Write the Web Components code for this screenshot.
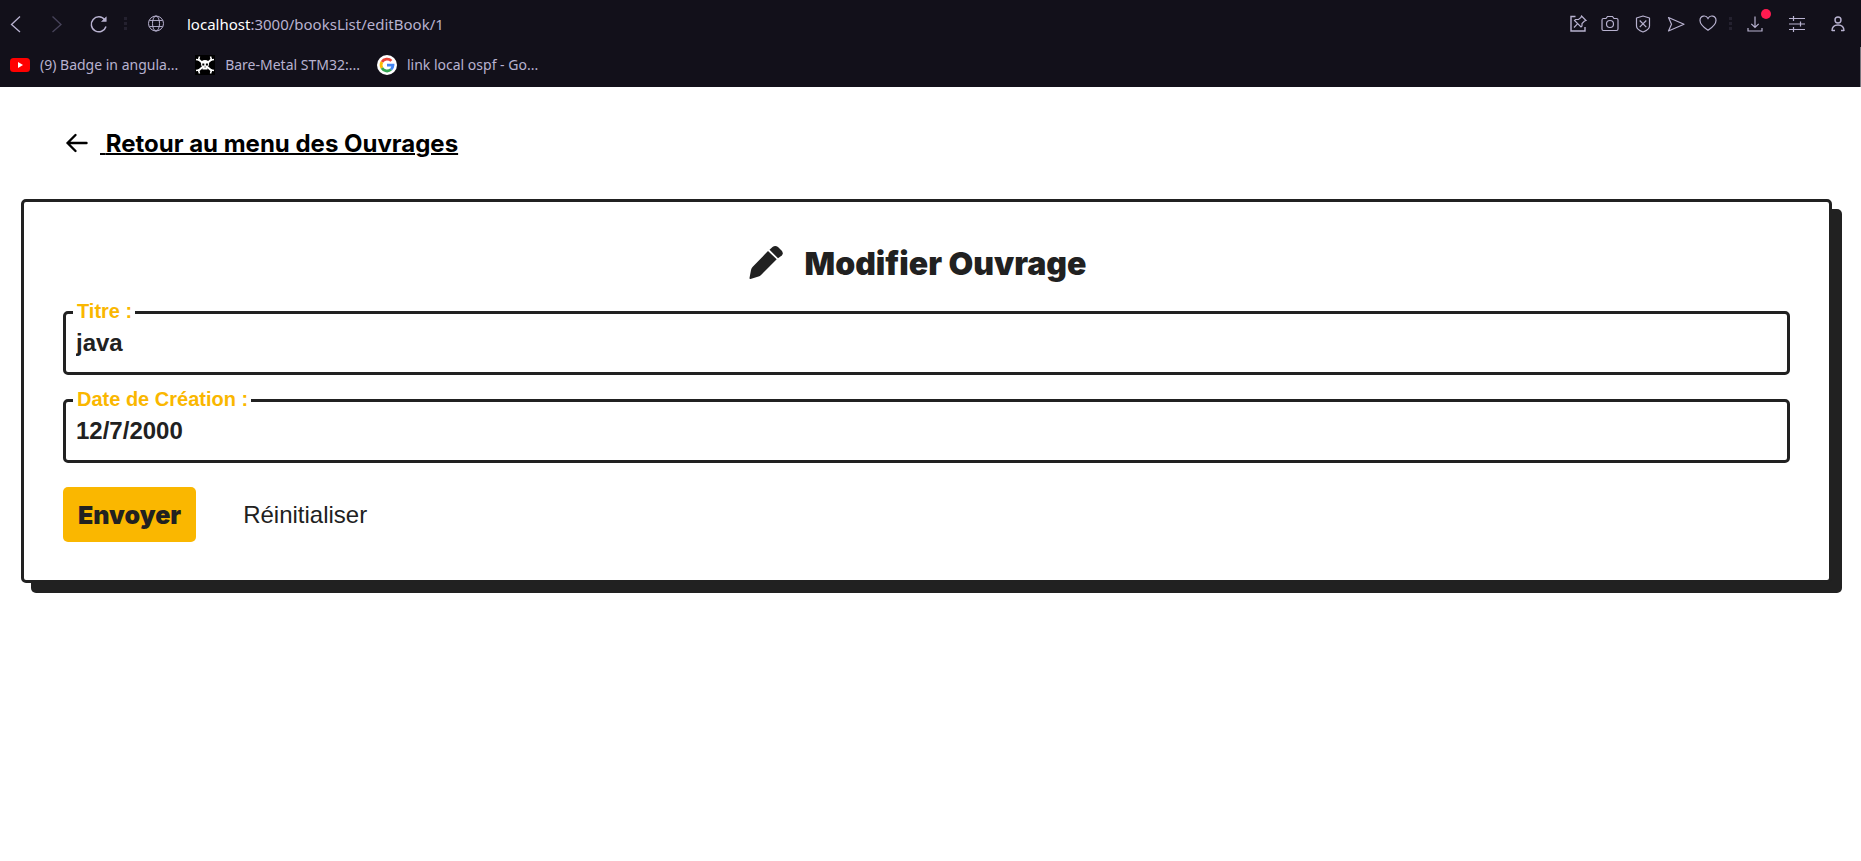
<!DOCTYPE html>
<html lang="fr">
<head>
<meta charset="utf-8">
<meta name="viewport" content="width=device-width, initial-scale=1">
<title>Modifier Ouvrage</title>
<style>
  body { margin: 0; min-height: 100vh; background: #fff; color: #212121; font-family: Inter, "Liberation Sans", sans-serif; }
  main { padding-bottom: 24px; }
</style>
</head>
<body>
<browser-chrome></browser-chrome>
<main>
  <back-link href="#">Retour au menu des Ouvrages</back-link>
  <book-card heading="Modifier Ouvrage">
    <text-field label="Titre :" name="titre" value="java"></text-field>
    <text-field label="Date de Création :" name="date" value="12/7/2000"></text-field>
    <form-actions></form-actions>
  </book-card>
</main>

<script>
const define = (name, html, setup) => {
  const template = document.createElement('template');
  template.innerHTML = html;
  customElements.define(name, class extends HTMLElement {
    constructor() {
      super();
      this.attachShadow({ mode: 'open' }).append(template.content.cloneNode(true));
    }
    connectedCallback() { if (setup) setup(this, this.shadowRoot); }
  });
};

/* Toolbar icon button: the slotted SVG is drawn on a 24px grid */
define('tool-button', `
  <style>
    :host { display: block; flex: none; position: relative; }
    button { display: block; width: 24px; height: 24px; padding: 0; border: 0; background: none; color: inherit; }
    ::slotted(svg) { display: block; width: 24px; height: 24px; fill: none; stroke: currentColor; }
    :host([off]) { color: #47435a; }
    :host([badge])::after { content: ""; position: absolute; right: -3px; top: -3px; width: 10px; height: 10px; border-radius: 50%; background: #ff1b50; }
  </style>
  <button type="button"><slot></slot></button>
`, (el, root) => root.querySelector('button').setAttribute('aria-label', el.getAttribute('label')));

define('bookmark-link', `
  <style>
    :host { display: block; flex: none; }
    a { display: flex; align-items: center; gap: 10px; color: inherit; text-decoration: none; white-space: nowrap; font-size: 14px; line-height: 20px; }
    ::slotted(svg) { display: block; width: 20px; height: 20px; }
  </style>
  <a href="#"><slot name="icon"></slot><span><slot></slot></span></a>
`);

define('browser-chrome', `
  <style>
    :host { display: block; background: #12101a; color: #b8b2d0; font-family: "Noto Sans", "Open Sans", sans-serif; }
    .bar { display: flex; align-items: center; height: 47px; box-sizing: border-box; padding: 0 11px 0 4px; }
    .nav { display: flex; gap: 17px; }
    .tools { display: flex; gap: 9px; }
    .menu { display: flex; gap: 17px; }
    .dots { width: 3px; height: 13px; margin: 0 17px 0 14px; flex: none; background: repeating-linear-gradient(#24212f 0 3px, transparent 3px 5px); }
    .tools + .dots { margin: 0 12px 0 8px; }
    .url { flex: 1; min-width: 0; margin-left: 19px; font-size: 15px; line-height: 24px; white-space: nowrap; overflow: hidden; }
    .url b { font-weight: 400; color: #fff; }
    .marks { display: flex; align-items: center; gap: 17px; height: 40px; box-sizing: border-box; padding: 0 10px 4px; border-right: 1px solid #77757c; }
  </style>
  <div class="bar">
    <div class="nav">
      <tool-button label="Précédent"><svg viewBox="0 0 24 24"><path d="M16 4.500 7.500 12.500 16 20" stroke-width="1.300"/></svg></tool-button>
      <tool-button label="Suivant" off><svg viewBox="0 0 24 24"><path d="M7.500 4.500 16 12.500 7.500 20" stroke-width="1.300"/></svg></tool-button>
      <tool-button label="Actualiser"><svg viewBox="0 0 24 24"><path d="M18.800 7.800A7.500 7.500 0 1 0 20 14.500" stroke-width="1.500"/><path d="M20.300 4.800V9.500H15.500Z" fill="currentColor" stroke-width=".5"/></svg></tool-button>
    </div>
    <div class="dots"></div>
    <tool-button label="Informations du site"><svg viewBox="0 0 24 24"><circle cx="12" cy="11.500" r="7.500"/><ellipse cx="12" cy="11.500" rx="3.500" ry="7.500"/><path d="M5.300 8.500h13.400M5.300 14.500h13.400" stroke-width=".9"/></svg></tool-button>
    <div class="url"><b>localhost</b>:3000/booksList/editBook/1</div>
    <div class="tools">
      <tool-button label="Épingler"><svg viewBox="0 0 24 24"><path d="M10.500 4.500H6v14.500h14V15" stroke-width="1.400"/><path d="M16.500 4 21 8.500 19.500 9 17 11.500V14L16 15 9.500 8.500 10.500 7.500h3L16 5.500ZM12.700 11.700 9 15.500" stroke-width="1.200"/></svg></tool-button>
      <tool-button label="Capture"><svg viewBox="0 0 24 24"><path d="M5.500 6.500H8L9.500 4.500h5L16 6.500h2.500q1.500 0 1.500 1.500v9q0 1.500-1.500 1.500h-13Q4 18.500 4 17V8Q4 6.500 5.500 6.500Z" stroke-width="1.200"/><circle cx="12" cy="12" r="3.500" stroke-width="1.200"/></svg></tool-button>
      <tool-button label="Bloqueur"><svg viewBox="0 0 24 24"><path d="M12 4 18.500 6v8q0 3.500-6.500 6Q5.500 17.500 5.500 14V6Z" stroke-width="1.200" stroke-linejoin="round"/><path d="M8.700 8.500l6.600 6.600M15.300 8.500l-6.600 6.600" stroke-width="1.200"/></svg></tool-button>
      <tool-button label="Envoyer la page"><svg viewBox="0 0 24 24"><path d="M4.500 5.500 20 12.300 4.500 19 7.500 12.300Z" stroke-width="1.200" stroke-linejoin="round"/></svg></tool-button>
      <tool-button label="Favori"><svg viewBox="0 0 24 24"><path d="M11 18.300C6 15 3 12 3 8.500 3 3.500 9 2.500 11 6.500 13 2.500 19 3.500 19 8.500 19 12 16 15 11 18.300Z" stroke-width="1.200"/></svg></tool-button>
    </div>
    <div class="dots"></div>
    <div class="menu">
      <tool-button label="Téléchargements" badge><svg viewBox="0 0 24 24"><path d="M11 4.500v11M7.300 11.800l3.700 3.700 3.700-3.700M4 16v3h14v-3" stroke-width="1.200"/></svg></tool-button>
      <tool-button label="Réglages"><svg viewBox="0 0 24 24"><path d="M4 6.500h16M4 12h16M4 17.500h16M8.500 4v5M15.500 9.500v5M8.500 15v5" stroke-width="1.200"/></svg></tool-button>
      <tool-button label="Profil"><svg viewBox="0 0 24 24"><circle cx="12" cy="8" r="3" stroke-width="1.400"/><path d="M6 19q0-6 6-6t6 6M6 18.500h3M15 18.500h3" stroke-width="1.400"/></svg></tool-button>
    </div>
  </div>
  <div class="marks">
    <bookmark-link>
      <svg slot="icon" viewBox="0 0 20 20"><rect y="3" width="20" height="14" rx="3.500" fill="#f00"/><path d="M8 7v6l5-3Z" fill="#fff"/></svg>(9) Badge in angula...</bookmark-link>
    <bookmark-link>
      <svg slot="icon" viewBox="0 0 20 20"><path fill="#000" d="M0 0h20v20H0z"/><g stroke="#fff" stroke-width="2"><path d="M3 4 17 16M17 4 3 16"/></g><g fill="none" stroke="#fff" stroke-width="1.500"><path d="M1 4.500 3.500 5 4.500 1.500M19 4.500 16.500 5 15.500 1.500M1 15.500 3.500 15 4.500 18.500M19 15.500 16.500 15 15.500 18.500"/></g><path d="M10 5q4 0 4 4 0 2-1.500 3v2.500h-5V12Q6 11 6 9 6 5 10 5Z" fill="#fff"/><path d="M7.300 8.500h2v2h-2zM10.900 8.500h2v2h-2zM9.600 11.500h1v1h-1z"/></svg>Bare-Metal STM32:...</bookmark-link>
    <bookmark-link>
      <svg slot="icon" viewBox="0 0 20 20"><circle cx="10" cy="10" r="10" fill="#fff"/><g fill="none" stroke-width="2.800"><path d="M4.900 7A6 6 0 0 1 14.400 5.900" stroke="#ea4335"/><path d="M4.900 13A6 6 0 0 1 4.900 7" stroke="#fbbc05"/><path d="M14 14.500A6 6 0 0 1 4.900 13" stroke="#34a853"/><path d="M10 10.200h6A6 6 0 0 1 14 14.500" stroke="#4285f4"/></g></svg>link local ospf - Go...</bookmark-link>
  </div>
`);

define('back-link', `
  <style>
    :host { display: flex; align-items: center; height: 112px; box-sizing: border-box; padding: 2px 0 0 64px; }
    a { display: flex; align-items: center; gap: 10px; color: #000; font-size: 24px; line-height: 32px; font-weight: 700; text-decoration: none; }
    svg { display: block; width: 26px; height: 26px; fill: none; stroke: currentColor; stroke-width: 2.400; stroke-linecap: round; stroke-linejoin: round; }
    span { white-space: pre; text-decoration: underline; text-decoration-thickness: 2px; }
  </style>
  <a><svg viewBox="0 0 26 26" aria-hidden="true"><path d="M22.500 12H3.500M11.500 4 3.500 12l8 8"/></svg><span> <slot></slot></span></a>
`, (el, root) => root.querySelector('a').setAttribute('href', el.getAttribute('href')));

define('book-card', `
  <style>
    :host { display: block; margin: 0 29px 0 21px; }
    form { display: flex; flex-direction: column; gap: 24px; padding: 39px 39px 38px; background: #fff; border: 3px solid #212121; border-radius: 5px; box-shadow: 10px 10px 0 #212121; }
    h1 { display: flex; align-items: center; justify-content: center; gap: 20px; margin: 0; padding-right: 18px; font-size: 32px; line-height: 46px; font-weight: 900; }
    svg { display: block; width: 36px; height: 36px; fill: currentColor; }
  </style>
  <form>
    <h1><svg viewBox="0 0 36 36" aria-hidden="true"><path d="M19 5 27.700 13.300 12 29Q11 30 9.500 30.500L1.500 33Q.3 33.200.5 32L2 24Q2.300 22.300 3.500 21Z"/><path d="M20.500 3.700 23.500 1Q26.300-.8 29 1L32.500 4.500Q34.800 7 32.800 9.500L29 12.300Z"/></svg><span></span></h1>
    <slot></slot>
  </form>
`, (el, root) => root.querySelector('span').textContent = el.getAttribute('heading'));

define('text-field', `
  <style>
    :host { display: block; position: relative; font-family: "Liberation Sans", Arial, sans-serif; }
    label { position: absolute; left: 10px; top: -12px; padding: 0 3px 0 4px; background: #fff; color: #fab700; font-size: 20px; line-height: 24px; font-weight: 700; }
    input { display: block; width: 100%; height: 64px; box-sizing: border-box; margin: 0; padding: 0 10px; border: 3px solid #212121; border-radius: 5px; background: #fff; color: #212121; font: inherit; font-size: 24px; font-weight: 700; outline: 0; }
  </style>
  <label for="field"></label>
  <input id="field" type="text">
`, (el, root) => {
  const input = root.querySelector('input');
  root.querySelector('label').textContent = el.getAttribute('label');
  input.name = el.getAttribute('name');
  input.value = el.getAttribute('value');
});

define('form-actions', `
  <style>
    :host { display: flex; gap: 32px; }
    button { height: 55px; padding: 0 15px; border: 0; border-radius: 5px; background: none; color: #212121; font: 400 24px/32px "Liberation Sans", Arial, sans-serif; }
    .send { background: #fab700; font-family: "Arial Black", Inter, sans-serif; font-size: 25px; font-weight: 900; }
  </style>
  <button class="send" type="submit">Envoyer</button>
  <button type="reset">Réinitialiser</button>
`);
</script>
</body>
</html>
